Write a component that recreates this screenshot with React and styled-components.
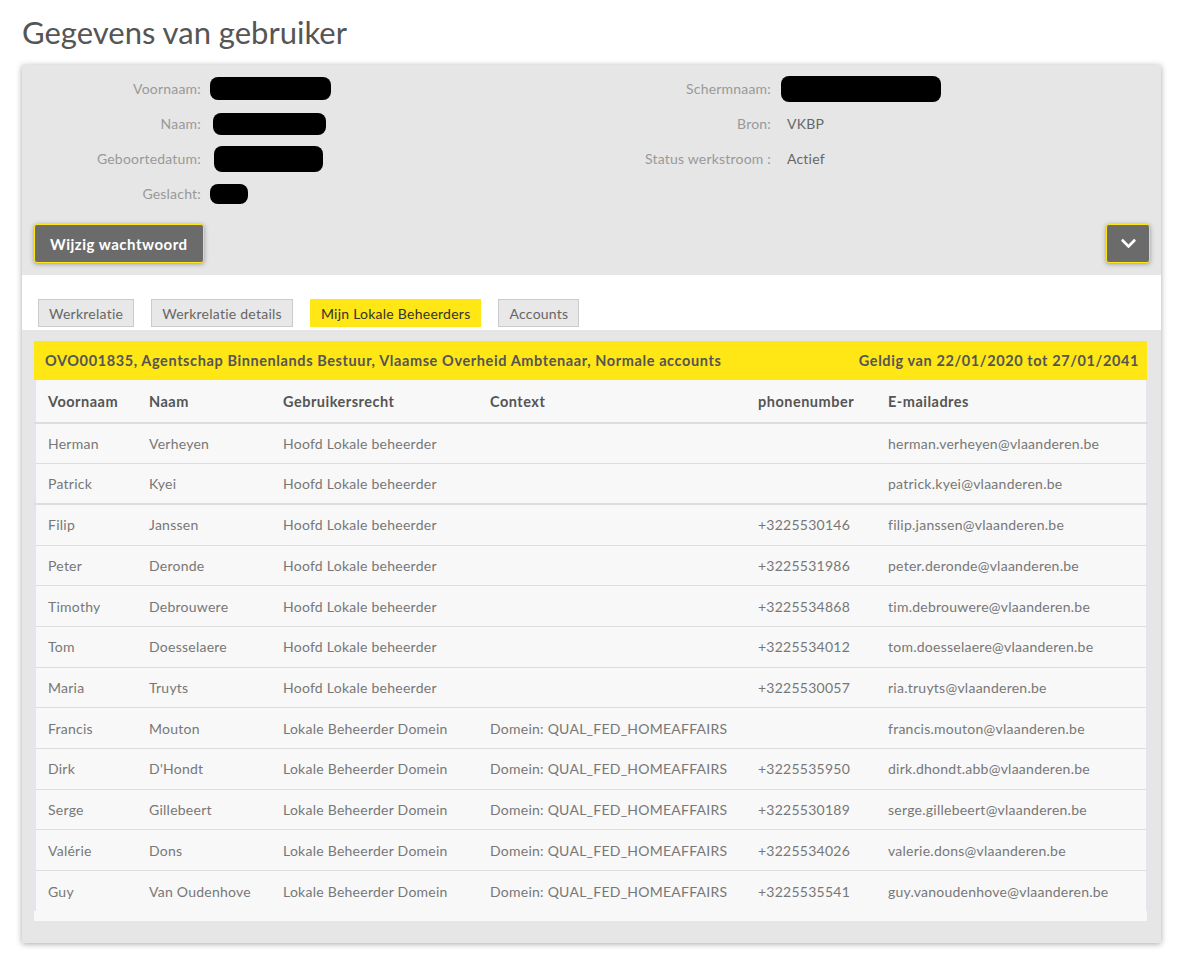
import styled, { createGlobalStyle } from 'styled-components';
import { FaChevronDown } from 'react-icons/fa';

const GlobalStyle = createGlobalStyle`
  body {
    margin: 0;
    background: #fff;
    font-family: Lato, "Open Sans", Arial, sans-serif;
    color: #666;
  }
  * { box-sizing: border-box; }
`;

const leftInfo = [
  { label: 'Voornaam:', blob: [121, 23], shift: 0 },
  { label: 'Naam:', blob: [113, 22], shift: 3 },
  { label: 'Geboortedatum:', blob: [109, 26], shift: 4 },
  { label: 'Geslacht:', blob: [38, 20], shift: 0 },
];

const rightInfo = [
  { label: 'Schermnaam:', blob: [160, 26], shift: -6 },
  { label: 'Bron:', value: 'VKBP' },
  { label: 'Status werkstroom :', value: 'Actief' },
];

const tabs = ['Werkrelatie', 'Werkrelatie details', 'Mijn Lokale Beheerders', 'Accounts'];

const columns = [
  { title: 'Voornaam', width: 102 },
  { title: 'Naam', width: 134 },
  { title: 'Gebruikersrecht', width: 207 },
  { title: 'Context', width: 268 },
  { title: 'phonenumber', width: 130 },
  { title: 'E-mailadres', width: 271 },
];

const DOMAIN = 'Domein: QUAL_FED_HOMEAFFAIRS';
const people = [
  ['Herman', 'Verheyen', 'Hoofd Lokale beheerder', '', '', 'herman.verheyen@vlaanderen.be'],
  ['Patrick', 'Kyei', 'Hoofd Lokale beheerder', '', '', 'patrick.kyei@vlaanderen.be'],
  ['Filip', 'Janssen', 'Hoofd Lokale beheerder', '', '+3225530146', 'filip.janssen@vlaanderen.be'],
  ['Peter', 'Deronde', 'Hoofd Lokale beheerder', '', '+3225531986', 'peter.deronde@vlaanderen.be'],
  ['Timothy', 'Debrouwere', 'Hoofd Lokale beheerder', '', '+3225534868', 'tim.debrouwere@vlaanderen.be'],
  ['Tom', 'Doesselaere', 'Hoofd Lokale beheerder', '', '+3225534012', 'tom.doesselaere@vlaanderen.be'],
  ['Maria', 'Truyts', 'Hoofd Lokale beheerder', '', '+3225530057', 'ria.truyts@vlaanderen.be'],
  ['Francis', 'Mouton', 'Lokale Beheerder Domein', DOMAIN, '', 'francis.mouton@vlaanderen.be'],
  ['Dirk', "D'Hondt", 'Lokale Beheerder Domein', DOMAIN, '+3225535950', 'dirk.dhondt.abb@vlaanderen.be'],
  ['Serge', 'Gillebeert', 'Lokale Beheerder Domein', DOMAIN, '+3225530189', 'serge.gillebeert@vlaanderen.be'],
  ['Valérie', 'Dons', 'Lokale Beheerder Domein', DOMAIN, '+3225534026', 'valerie.dons@vlaanderen.be'],
  ['Guy', 'Van Oudenhove', 'Lokale Beheerder Domein', DOMAIN, '+3225535541', 'guy.vanoudenhove@vlaanderen.be'],
];

export default function App() {
  return (
    <Page>
      <GlobalStyle />
      <Title>Gegevens van gebruiker</Title>
      <Card>
        <Header>
          <InfoGrid>
            <InfoColumn offset={-12}>
              {leftInfo.map((row) => (
                <InfoRow key={row.label} gap={9}>
                  <Label>{row.label}</Label>
                  <Redacted w={row.blob[0]} h={row.blob[1]} shift={row.shift} />
                </InfoRow>
              ))}
            </InfoColumn>
            <InfoColumn offset={0}>
              {rightInfo.map((row) => (
                <InfoRow key={row.label} gap={16}>
                  <Label>{row.label}</Label>
                  {row.blob ? (
                    <Redacted w={row.blob[0]} h={row.blob[1]} shift={row.shift} />
                  ) : (
                    <Value>{row.value}</Value>
                  )}
                </InfoRow>
              ))}
            </InfoColumn>
          </InfoGrid>
          <ButtonBar>
            <DarkButton>Wijzig wachtwoord</DarkButton>
            <IconButton aria-label="meer">
              <FaChevronDown size={17} />
            </IconButton>
          </ButtonBar>
        </Header>

        <TabBar>
          {tabs.map((t) => (
            <Tab key={t} active={t === 'Mijn Lokale Beheerders'}>{t}</Tab>
          ))}
        </TabBar>

        <Content>
          <Banner>
            <span>OVO001835, Agentschap Binnenlands Bestuur, Vlaamse Overheid Ambtenaar, Normale accounts</span>
            <span>Geldig van 22/01/2020 tot 27/01/2041</span>
          </Banner>
          <TableWrap>
            <Table>
              <colgroup>
                {columns.map((c) => (
                  <col key={c.title} style={{ width: c.width }} />
                ))}
              </colgroup>
              <thead>
                <tr>
                  {columns.map((c) => (
                    <Th key={c.title}>{c.title}</Th>
                  ))}
                </tr>
              </thead>
              <tbody>
                {people.map((p, i) => (
                  <Row key={p[5]} thick={i === 1}>
                    {p.map((cell, j) => (
                      <Td key={j}>{cell}</Td>
                    ))}
                  </Row>
                ))}
              </tbody>
            </Table>
          </TableWrap>
        </Content>
      </Card>
    </Page>
  );
}

const Page = styled.div`
  padding: 12px 17px 11px 22px;
`;

const Title = styled.h1`
  margin: 0 0 13px;
  font-family: Lato, "Open Sans", sans-serif;
  font-weight: 400;
  font-size: 31px;
  line-height: 40px;
  color: #555;
`;

const Card = styled.div`
  background: #e6e6e6;
  box-shadow: 0 1px 6px rgba(0, 0, 0, 0.35);
`;

const Header = styled.div`
  padding: 6px 11px 12px 12px;
`;

const InfoGrid = styled.div`
  display: grid;
  grid-template-columns: 1fr 1fr;
`;

const InfoColumn = styled.div`
  display: flex;
  flex-direction: column;
  margin-left: ${({ offset }) => offset}px;
`;

const InfoRow = styled.div`
  display: flex;
  align-items: center;
  height: 35px;
  gap: ${({ gap }) => gap}px;
`;

const Label = styled.span`
  width: 179px;
  text-align: right;
  font-size: 14px;
  letter-spacing: 0.2px;
  color: #999;
`;

const Value = styled.span`
  font-size: 14px;
  letter-spacing: 0.2px;
  color: #666;
`;

const Redacted = styled.span`
  display: inline-block;
  width: ${({ w }) => w}px;
  height: ${({ h }) => h}px;
  margin-left: ${({ shift }) => shift}px;
  background: #000;
  border-radius: 8px;
`;

const ButtonBar = styled.div`
  display: flex;
  justify-content: space-between;
  align-items: flex-end;
  margin-top: 13px;
`;

const DarkButton = styled.button`
  height: 39px;
  padding: 0 15px;
  background: #6b6b6b;
  border: 1px solid #ffe615;
  border-radius: 3px;
  box-shadow: 0 1px 5px rgba(0, 0, 0, 0.35);
  color: #fff;
  font-family: Lato, "Open Sans", sans-serif;
  font-weight: 700;
  font-size: 15px;
  letter-spacing: 0.5px;
  cursor: pointer;
`;

const IconButton = styled(DarkButton)`
  width: 44px;
  padding: 0;
  display: flex;
  align-items: center;
  justify-content: center;
`;

const TabBar = styled.div`
  display: flex;
  gap: 17px;
  background: #fff;
  padding: 24px 16px 3px;
`;

const Tab = styled.div`
  height: 28px;
  padding: 0 10px;
  display: flex;
  align-items: center;
  font-size: 14px;
  letter-spacing: 0.25px;
  color: ${({ active }) => (active ? '#333' : '#666')};
  background: ${({ active }) => (active ? '#ffe615' : '#e8e8e8')};
  border: 1px solid ${({ active }) => (active ? '#ffe615' : '#cbcbcb')};
`;

const Content = styled.div`
  padding: 11px 14px 22px 12px;
`;

const Banner = styled.div`
  display: flex;
  justify-content: space-between;
  align-items: center;
  height: 39px;
  padding: 0 8px 0 11px;
  background: #ffe615;
  font-weight: 700;
  font-size: 14.5px;
  letter-spacing: 0.6px;
  color: #555;
`;

const TableWrap = styled.div`
  background: #f8f8f8;
  padding-bottom: 10px;
`;

const Table = styled.table`
  width: 100%;
  table-layout: fixed;
  border-collapse: collapse;
  border-left: 2px solid #e4e5ee;
  border-right: 2px solid #e4e5ee;
  font-size: 14px;
`;

const Th = styled.th`
  height: 43px;
  padding: 0 0 0 12px;
  text-align: left;
  font-weight: 700;
  font-size: 14.5px;
  letter-spacing: 0.5px;
  color: #555;
  border-bottom: 2px solid #ddd;
`;

const Row = styled.tr`
  border-bottom: ${({ thick }) => (thick ? '2px' : '1px')} solid #ddd;
  &:last-child {
    border-bottom: none;
  }
`;

const Td = styled.td`
  height: 40.7px;
  padding: 0 0 0 12px;
  color: #777;
  letter-spacing: 0.25px;
  white-space: nowrap;
`;
